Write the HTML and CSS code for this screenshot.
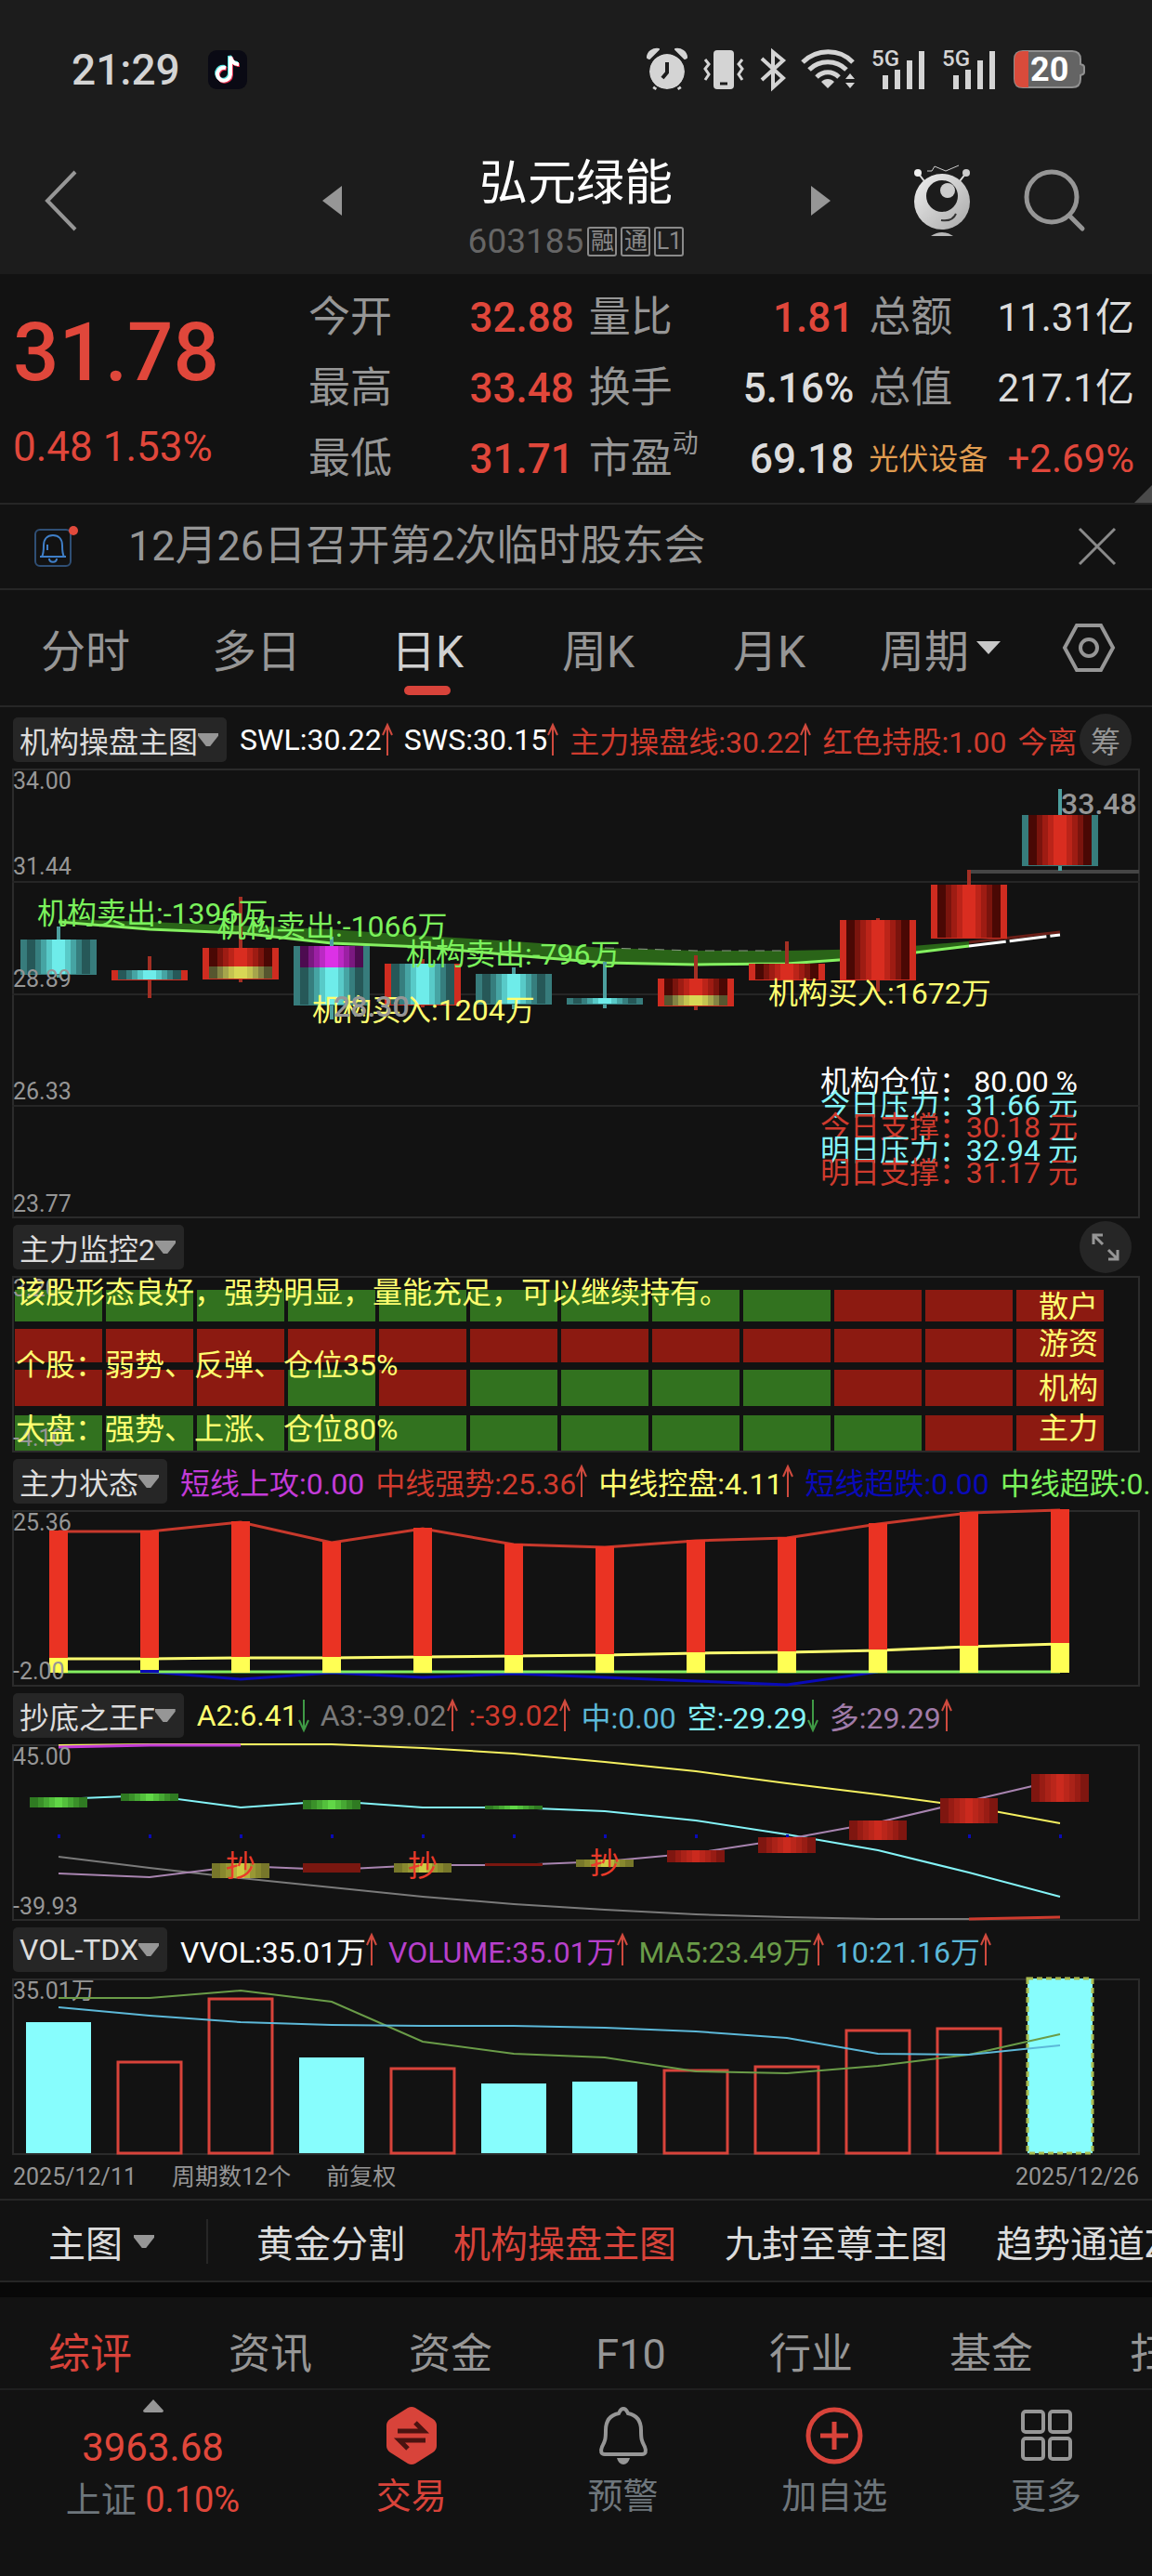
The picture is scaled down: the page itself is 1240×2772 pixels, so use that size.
FILE: index.html
```html
<!DOCTYPE html>
<html lang="zh-CN">
<head>
    <meta charset="UTF-8">
    <meta name="viewport" content="width=device-width, initial-scale=1.0">
    <title>弘元绿能 603185</title>
    <link rel="stylesheet" href="styles.css">
</head>
<body>
    <header class="top">
        <div class="status-bar">
            <span class="clock">21:29</span>
            <svg class="app-icon" width="42" height="42" viewBox="0 0 42 42">
                <rect width="42" height="42" rx="9" fill="#0a0a14"/>
                <g fill="none" stroke-width="4">
                    <path d="M18 18a7 7 0 1 0 5 7V6c1 5 4 8 9 8" stroke="#4fe3e0"/>
                    <path d="M20 20a7 7 0 1 0 5 7V8c1 5 4 8 9 8" stroke="#e8304f"/>
                    <path d="M19 19a7 7 0 1 0 5 7V7c1 5 4 8 9 8" stroke="#fff"/>
                </g>
            </svg>
            <div class="status-icons">
                <svg width="44" height="46" viewBox="0 0 44 46" fill="#d4d4d4">
                    <circle cx="22" cy="25" r="19"/>
                    <path d="M1 10C1 4 7 0 13 1L3 11zM43 10C43 4 37 0 31 1l10 10z" stroke="#d4d4d4" stroke-width="2" stroke-linejoin="round"/>
                    <path d="M12 38l-4 6M32 38l4 6" stroke="#d4d4d4" stroke-width="4"/>
                    <circle cx="22" cy="25" r="20" fill="none" stroke="#1c1c1c" stroke-width="2"/>
                    <path d="M22 15v11l-5 6" fill="none" stroke="#1c1c1c" stroke-width="4"/>
                </svg>
                <svg width="46" height="44" viewBox="0 0 46 44" fill="none" stroke="#d4d4d4" stroke-width="3">
                    <rect x="12" y="1" width="22" height="42" rx="4" fill="#d4d4d4" stroke="none"/>
                    <path d="M19 37h8" stroke="#1c1c1c"/>
                    <path d="M3 11l4 5-4 5 4 6-4 6M43 11l-4 5 4 5-4 6 4 6"/>
                </svg>
                <svg width="28" height="44" viewBox="0 0 28 44" fill="none" stroke="#d4d4d4" stroke-width="4">
                    <path d="M2 10l23 21-11 10V3l11 9L2 33"/>
                </svg>
                <svg width="60" height="44" viewBox="0 0 60 44" fill="none" stroke="#d4d4d4" stroke-width="5">
                    <path d="M2 14c15-15 40-15 54 0M9 22c11-11 29-11 40 0M17 30c7-7 17-7 24 0"/>
                    <path d="M29 42l-7-7c4-4 10-4 14 0zM48 32l5-6 5 6zM48 36l5 6 5-6z" fill="#d4d4d4" stroke="none"/>
                </svg>
                <svg width="60" height="44" viewBox="0 0 60 44" fill="#d4d4d4">
                    <text x="0" y="18" class="net">5G</text>
                    <path d="M12 28h6v15h-6zM25 22h6v21h-6zM38 12h6v31h-6zM51 2h6v41h-6z"/>
                </svg>
                <svg width="60" height="44" viewBox="0 0 60 44" fill="#d4d4d4">
                    <text x="0" y="18" class="net">5G</text>
                    <path d="M12 28h6v15h-6zM25 22h6v21h-6zM38 12h6v31h-6zM51 2h6v41h-6z"/>
                </svg>
                <svg width="78" height="42" viewBox="0 0 78 42">
                    <path d="M11 1h53q9 0 9 9v5q4 1 4 3v6q0 2-4 3v4q0 9-9 9H11q-9 0-9-9V10q0-9 9-9z" fill="#646464" stroke="#909090" stroke-width="2"/>
                    <path d="M17 1h-6q-9 0-9 9v21q0 9 9 9h6z" fill="#d94b3b"/>
                    <text x="19" y="33" class="battery">20</text>
                </svg>
            </div>
        </div>
        <div class="title-bar">
            <button class="icon-btn" aria-label="返回">
                <svg width="36" height="66" viewBox="0 0 36 66" fill="none" stroke="#969696" stroke-width="4"><path d="M33 2L3 33l30 31"/></svg>
            </button>
            <div class="stock">
                <button class="icon-btn" aria-label="上一只">
                    <svg width="21" height="32" viewBox="0 0 21 32"><path d="M21 0v32L0 16z" fill="#969696"/></svg>
                </button>
                <div class="stock-name">
                    <h1>弘元绿能</h1>
                    <div class="stock-code">603185<span class="tag">融</span><span class="tag">通</span><span class="tag">L1</span></div>
                </div>
                <button class="icon-btn" aria-label="下一只">
                    <svg width="21" height="32" viewBox="0 0 21 32"><path d="M0 0v32l21-16z" fill="#969696"/></svg>
                </button>
            </div>
            <div class="title-tools">
                <button class="icon-btn" aria-label="助手">
                    <svg width="62" height="78" viewBox="0 0 62 78">
                        <defs>
                            <linearGradient id="robot" x1="0" y1="0" x2="1" y2="1">
                                <stop offset="0" stop-color="#f0f0f0"/>
                                <stop offset="1" stop-color="#a8a8a8"/>
                            </linearGradient>
                        </defs>
                        <path d="M5 9l7 9M57 9l-7 9" stroke="#ddd" stroke-width="2"/>
                        <circle cx="5" cy="9" r="4" fill="#eee"/>
                        <circle cx="57" cy="9" r="4" fill="#ccc"/>
                        <path d="M15 7h5l3-5 12 5 14-6" fill="none" stroke="#ccc" stroke-width="1"/>
                        <circle cx="31" cy="40" r="30" fill="url(#robot)"/>
                        <circle cx="31" cy="34" r="17" fill="#1c1c1c"/>
                        <circle cx="37" cy="28" r="8" fill="#ccc"/>
                        <path d="M30 60q12 2 16-7" fill="none" stroke="#333" stroke-width="2"/>
                        <path d="M19 77q12-8 24 0z" fill="#b8b8b8"/>
                    </svg>
                </button>
                <button class="icon-btn" aria-label="搜索">
                    <svg width="66" height="66" viewBox="0 0 66 66" fill="none" stroke="#969696" stroke-width="5"><circle cx="30" cy="29" r="27"/><path d="M49 49l14 14" stroke-linecap="round"/></svg>
                </button>
            </div>
        </div>
    </header>

    <main>
        <section class="quote">
            <div class="price up">
                <div class="price-now">31.78</div>
                <div class="price-change">0.48 1.53%</div>
            </div>
            <dl class="quote-grid">
                <div><dt>今开</dt><dd class="up">32.88</dd></div>
                <div><dt>量比</dt><dd class="up">1.81</dd></div>
                <div><dt>总额</dt><dd class="small">11.31亿</dd></div>
                <div><dt>最高</dt><dd class="up">33.48</dd></div>
                <div><dt>换手</dt><dd>5.16%</dd></div>
                <div><dt>总值</dt><dd class="small">217.1亿</dd></div>
                <div><dt>最低</dt><dd class="up">31.71</dd></div>
                <div><dt>市盈<sup>动</sup></dt><dd>69.18</dd></div>
                <div><dt class="sector">光伏设备</dt><dd class="small up">+2.69%</dd></div>
            </dl>
            <span class="corner"></span>
        </section>

        <section class="notice">
            <svg width="48" height="48" viewBox="0 0 48 48" fill="none" stroke="#3f7fc8" stroke-width="3">
                <rect x="2" y="6" width="38" height="39" rx="5" stroke="#2f4f75" stroke-width="2"/>
                <path d="M7 35h28M9 35c2-3 2-7 2-12 0-7 4-11 10-11s10 4 10 11c0 5 0 9 2 12M17 37c0 5 8 5 8 0" stroke-width="2"/>
                <path d="M15 28v-6" stroke-width="2"/>
                <circle cx="43" cy="7" r="5" fill="#e04a3c" stroke="none"/>
            </svg>
            <a href="#">12月26日召开第2次临时股东会</a>
            <button class="icon-btn" aria-label="关闭">
                <svg width="40" height="40" viewBox="0 0 40 40" stroke="#8a8a8a" stroke-width="3"><path d="M1 1l38 38M39 1L1 39"/></svg>
            </button>
        </section>

        <nav class="periods">
            <button>分时</button>
            <button>多日</button>
            <button class="active">日K</button>
            <button>周K</button>
            <button>月K</button>
            <button>周期<i class="caret light"></i></button>
            <button class="settings" aria-label="设置">
                <svg width="58" height="52" viewBox="0 0 58 52" fill="none" stroke="#969696" stroke-width="4"><path d="M16 2h26l13 24-13 24H16L3 26z"/><circle cx="29" cy="26" r="9"/></svg>
            </button>
        </nav>

        <section class="panel first">
            <div class="panel-head">
                <button class="indicator">机构操盘主图<i class="caret"></i></button>
                <div class="legend" data-legend="main"></div>
                <button class="round">筹</button>
            </div>
            <svg class="chart" id="chart-main" viewBox="0 0 1214 484"></svg>
        </section>

        <section class="panel">
            <div class="panel-head">
                <button class="indicator">主力监控2<i class="caret"></i></button>
                <div class="legend"></div>
                <button class="round" aria-label="全屏">
                    <svg width="30" height="30" viewBox="0 0 30 30" fill="none" stroke="#969696" stroke-width="3"><path d="M2 12V2h10M2 2l10 10M28 18v10H18M28 28L18 18"/></svg>
                </button>
            </div>
            <svg class="chart" id="chart-monitor" viewBox="0 0 1214 190"></svg>
        </section>

        <section class="panel">
            <div class="panel-head">
                <button class="indicator">主力状态<i class="caret"></i></button>
                <div class="legend" data-legend="state"></div>
            </div>
            <svg class="chart" id="chart-state" viewBox="0 0 1214 190"></svg>
        </section>

        <section class="panel">
            <div class="panel-head">
                <button class="indicator">抄底之王F<i class="caret"></i></button>
                <div class="legend" data-legend="bottom"></div>
            </div>
            <svg class="chart" id="chart-bottom" viewBox="0 0 1214 190"></svg>
        </section>

        <section class="panel">
            <div class="panel-head">
                <button class="indicator">VOL-TDX<i class="caret"></i></button>
                <div class="legend" data-legend="vol"></div>
            </div>
            <svg class="chart" id="chart-vol" viewBox="0 0 1214 190"></svg>
        </section>

        <div class="range">
            <span>2025/12/11</span>
            <span>周期数12个</span>
            <span>前复权</span>
            <span class="range-end">2025/12/26</span>
        </div>

        <div class="templates">
            <button class="template-pick">主图<i class="caret"></i></button>
            <button>黄金分割</button>
            <button class="active">机构操盘主图</button>
            <button>九封至尊主图</button>
            <button>趋势通道Z</button>
        </div>

        <nav class="info-tabs">
            <a href="#" class="active">综评</a>
            <a href="#">资讯</a>
            <a href="#">资金</a>
            <a href="#">F10</a>
            <a href="#">行业</a>
            <a href="#">基金</a>
            <a href="#">扫雷</a>
        </nav>
    </main>

    <footer class="bottom-nav">
        <a href="#" class="index">
            <svg width="22" height="14" viewBox="0 0 22 14"><path d="M11 0l11 12q0 2-2 2H2q-2 0-2-2z" fill="#969696"/></svg>
            <span class="index-value">3963.68</span>
            <span class="index-name">上证 <b>0.10%</b></span>
        </a>
        <a href="#" class="active">
            <svg width="56" height="62" viewBox="0 0 56 62">
                <path d="M24 1q4-2 8 0l19 12q4 3 4 7v22q0 4-4 7L32 61q-4 2-8 0L5 49q-4-3-4-7V20q0-4 4-7z" fill="#d8433a"/>
                <path d="M13 26h28l-9-9M43 36H15l9 9" fill="none" stroke="#4a1310" stroke-width="5"/>
            </svg>
            <span>交易</span>
        </a>
        <a href="#">
            <svg width="56" height="62" viewBox="0 0 56 62" fill="none" stroke="#969696" stroke-width="4">
                <path d="M28 2c-3 0-4 3-5 5C13 9 9 16 9 25c0 11-1 12-4 18-2 5-1 8 3 8h40c4 0 5-3 3-8-3-6-4-7-4-18 0-9-4-16-14-18-1-2-2-5-5-5z"/>
                <path d="M21 55h14q-2 7-7 7t-7-7z" fill="#969696" stroke="none"/>
            </svg>
            <span>预警</span>
        </a>
        <a href="#">
            <svg width="62" height="62" viewBox="0 0 62 62" fill="none" stroke="#d8433a" stroke-width="5"><circle cx="31" cy="31" r="28"/><path d="M16 31h30M31 16v30"/></svg>
            <span>加自选</span>
        </a>
        <a href="#">
            <svg width="56" height="62" viewBox="0 0 56 62" fill="none" stroke="#969696" stroke-width="4"><rect x="3" y="5" width="22" height="22" rx="3"/><rect x="32" y="5" width="22" height="22" rx="3"/><rect x="3" y="34" width="22" height="22" rx="3"/><rect x="32" y="34" width="22" height="22" rx="3"/></svg>
            <span>更多</span>
        </a>
    </footer>

    <script>
        const STEP = 98;
        const FIRST = 50;
        const cx = i => FIRST + i * STEP;

        const RED = ['#4a0804', '#7a140d', '#9e1c13', '#bb2419', '#d92d20'];
        const CYAN = ['#265858', '#367e7e', '#46a4a3', '#58cac8', '#6eecea'];
        const YELLOW = ['#56562f', '#838343', '#a6a54b', '#c4c350', '#d8d755'];
        const MAGENTA = ['#4d0b50', '#7a1880', '#9c20a4', '#bb29c4', '#dc31e6'];
        const GREEN = ['#2f7a22', '#3a9029', '#46a833', '#53c03c', '#61d747'];
        const OLIVE = ['#77772a', '#88882e', '#989834', '#b6b53c', '#cfcd44'];
        const BRICK = ['#7f1610', '#981c14', '#aa2218', '#ba261b', '#cb2a1e'];
        const DARK = ['#7a1710', '#7a1710', '#7a1710', '#7a1710', '#7a1710'];

        const rect = (x, y, w, h, fill, extra = '') =>
            `<rect x="${x}" y="${y}" width="${w}" height="${h}" fill="${fill}" ${extra}/>`;

        const line = (values, color, width = 2, start = 0, extra = '') =>
            `<polyline points="${values.map((v, i) => cx(i + start) + ',' + v).join(' ')}" fill="none" stroke="${color}" stroke-width="${width}" ${extra}/>`;

        const text = (x, y, str, color, cls = '') =>
            `<text x="${x}" y="${y}" fill="${color}" class="${cls}">${str}</text>`;

        const frame = h => `<rect x="1" y="1" width="1212" height="${h - 2}" fill="none" stroke="#2b2b2b" stroke-width="2"/>`;

        // Vertical bands, dark at both sides and bright in the middle
        function shaded(i, top, bottom, colors, half) {
            const steps = [half, half - 9, half - 15, half - 21, half - 27];
            return steps.map((s, k) => rect(cx(i) - s, top, s * 2, bottom - top, colors[k])).join('');
        }

        // [body top, body bottom, wick top, wick bottom, edge, fill, split, fill below the split]
        const candles = [
            [184, 222, 170, 225, 'c', CYAN],
            [217, 228, 202, 247, 'r', CYAN],
            [193, 227, 138, 230, 'r', RED, 213, YELLOW],
            [191, 255, 181, 270, 'c', MAGENTA, 214, CYAN],
            [210, 255, 205, 257, 'r', CYAN],
            [221, 254, 214, 259, 'c', CYAN],
            [247, 254, 208, 258, 'c', CYAN],
            [226, 256, 201, 260, 'r', RED, 244, YELLOW],
            [210, 228, 186, 229, 'r', RED],
            [163, 228, 161, 240, 'r', RED],
            [125, 183, 109, 183, 'r', RED],
            [50, 105, 22, 110, 'c', RED]
        ];

        function drawMain() {
            let out = frame(484);
            [121, 242, 362].forEach(y => { out += rect(0, y, 1214, 2, '#262626'); });

            const upper = [162, 165, 169, 173, 180, 186, 193, 196, 196, 194, 186];
            const lower = [165, 173, 177, 188, 192, 201, 209, 211, 210, 203, 191];
            const band = upper.map((v, i) => cx(i) + ',' + v)
                .concat(lower.map((v, i) => cx(i) + ',' + v).reverse());
            out += `<polygon points="${band.join(' ')}" fill="#2a6418"/>`;
            out += line([193, 196, 196], '#8a9a84', 1, 6, 'stroke-dasharray="10 8"');
            out += line(lower, '#84f060', 3);
            out += line([187, 176], '#6a1f18', 3, 10);
            out += line([191, 179], '#fff', 3, 10, 'stroke-dasharray="40 4"');
            out += rect(1030, 109, 183, 4, '#454545');

            candles.forEach(([top, bottom, high, low, edge, fill, split, below], i) => {
                const edgeColor = edge === 'r' ? '#cf2c20' : '#377c7c';
                const wick = edge === 'r' ? '#a32f24' : '#4c9f9e';
                out += rect(cx(i) - 2, high, 4, low - high, wick);
                out += rect(cx(i) - 41, top, 82, bottom - top, edgeColor);
                out += shaded(i, top, (split || bottom - 1), fill, 34);
                if (split) out += shaded(i, split, bottom - 1, below, 34);
            });

            ['34.00', '31.44', '28.89', '26.33', '23.77'].forEach((v, k) => {
                out += text(1, [22, 114, 235, 356, 477][k], v, '#969696', 'axis');
            });
            out += text(27, 167, '机构卖出:-1396万', '#7bf25c');
            out += text(220, 181, '机构卖出:-1066万', '#7bf25c');
            out += text(424, 211, '机构卖出:-796万', '#7bf25c');
            out += text(323, 271, '机构买入:1204万', '#ffff70');
            out += text(346, 267, '28.30', '#969696', 'num');
            out += text(814, 253, '机构买入:1672万', '#ffff70');
            out += text(1129, 49, '33.48', '#969696', 'num');

            const levels = [
                ['机构仓位：', '80.00 %', '#ffffff'],
                ['今日压力：', '31.66 元', '#84f4f8'],
                ['今日支撑：', '30.18 元', '#cf3b2e'],
                ['明日压力：', '32.94 元', '#84f4f8'],
                ['明日支撑：', '31.17 元', '#cf3b2e']
            ];
            levels.forEach(([name, value, color], k) => {
                const y = 348 + [0, 25, 49, 74, 98][k];
                out += text(870, y, name, color);
                out += text(1147, y, value, color, 'end');
            });
            document.getElementById('chart-main').innerHTML = out;
        }

        function drawMonitor() {
            const rows = [
                [15, 34, 'GGGGGGGGGRRR', '散户', 44],
                [57, 36, 'RRRRRRRRRRRR', '游资', 84],
                [101, 39, 'RRRGRGGGGRRR', '机构', 132],
                [150, 38, 'GGGGGGGGGGRR', '主力', 175]
            ];
            let out = frame(190);
            rows.forEach(([y, h, cells]) => {
                [...cells].forEach((c, i) => {
                    out += rect(3 + i * STEP, y, 94, h, c === 'G' ? '#32721f' : '#8c1a11');
                });
            });
            out += text(1, 22, '3.20', '#969696', 'axis');
            out += text(1, 183, '-4.10', '#969696', 'axis');
            rows.forEach(([, , , name, base]) => { out += text(1105, base, name, '#ffff70'); });
            out += text(4, 29, '该股形态良好，强势明显，量能充足，可以继续持有。', '#ffff70');
            out += text(4, 107, '个股：弱势、反弹、仓位35%', '#ffff70');
            out += text(4, 176, '大盘：强势、上涨、仓位80%', '#ffff70');
            document.getElementById('chart-monitor').innerHTML = out;
        }

        function drawState() {
            const strong = [23, 23, 13, 35, 20, 37, 40, 33, 30, 15, 3, 0];
            const control = [160, 160, 159, 159, 158, 157, 156, 154, 153, 151, 147, 144];
            let out = frame(190);
            out += line([174, 182, 175, 180, 176, 180, 184, 188, 174], '#0a0ab8', 3, 1);
            out += line(strong, '#c8392c', 3);
            out += line(control, '#ffff70', 3);
            out += line(strong.map(() => 174), '#84f060', 3);
            strong.forEach((v, i) => {
                out += rect(cx(i) - 10, v - 1, 20, control[i] - v, '#ea3323');
                out += rect(cx(i) - 10, control[i] - 1, 20, 176 - control[i], '#ffff54');
            });
            out += rect(cx(1) - 10, 172, 20, 3, '#0a0ab8');
            out += text(1, 22, '25.36', '#969696', 'axis');
            out += text(1, 182, '-2.00', '#969696', 'axis');
            document.getElementById('chart-state').innerHTML = out;
        }

        function drawBottom() {
            let out = frame(190);
            out += line([1, 0, 0, 0, 4, 10, 19, 29, 42, 54, 67, 85], '#f5f060', 2);
            out += line([3, 1, 1], '#c33bd8', 3);
            out += line([121, 133, 144, 154, 164, 172, 178, 183, 186, 188, 188], '#7a7a7a', 2);
            out += line([188, 186], '#cf3b2e', 3, 10);
            out += line([59, 55, 68, 61, 68, 68, 72, 82, 97, 114, 138, 164], '#84f4f8', 2);
            out += line([139, 143, 131, 135, 130, 130, 126, 117, 102, 84, 61, 38], '#a884b0', 2);
            for (let i = 0; i < 12; i++) out += rect(cx(i) - 1, 97, 3, 4, '#0a0ab8');
            const boxes = [
                [0, 57, 68, GREEN], [1, 53, 61, GREEN], [3, 60, 70, GREEN], [5, 66, 70, GREEN],
                [2, 128, 144, OLIVE], [4, 128, 138, OLIVE], [6, 124, 132, OLIVE],
                [3, 128, 138, DARK], [5, 128, 131, DARK],
                [7, 114, 127, BRICK], [8, 100, 117, BRICK], [9, 82, 103, BRICK],
                [10, 58, 85, BRICK], [11, 32, 62, BRICK]
            ];
            boxes.forEach(([i, top, bottom, colors]) => { out += shaded(i, top, bottom, colors, 31); });
            [[2, 142], [4, 142], [6, 139]].forEach(([i, y]) => { out += text(cx(i), y, '抄', '#ea3a2a', 'mid'); });
            out += text(1, 22, '45.00', '#969696', 'axis');
            out += text(1, 183, '-39.93', '#969696', 'axis');
            document.getElementById('chart-bottom').innerHTML = out;
        }

        function drawVolume() {
            const tops = [47, 89, 21, 85, 96, 113, 111, 98, 94, 55, 53, 0];
            const kinds = 'crrcrccrrrrc';
            let out = frame(190);
            out += text(1, 22, '35.01万', '#969696', 'axis');
            tops.forEach((y, i) => {
                if (kinds[i] === 'c') out += rect(cx(i) - 35, y, 70, 188 - y, '#87fdfd');
                else out += rect(cx(i) - 34, y + 1, 68, 187 - y, 'none', 'stroke="#d8433a" stroke-width="3"');
            });
            out += rect(cx(11) - 35, 0, 70, 188, 'none', 'stroke="#a9bd50" stroke-width="3" stroke-dasharray="6 4"');
            out += line([21, 21, 13, 25, 68, 81, 85, 100, 102, 94, 82, 60], '#6a9c48', 2);
            out += line([31, 40, 47, 50, 51, 51, 53, 57, 64, 81, 82, 72], '#5cb8d8', 2);
            document.getElementById('chart-vol').innerHTML = out;
        }

        // [text, colour, trend]
        const legends = {
            main: [
                ['SWL:30.22', '#ffffff', 'up'], ['SWS:30.15', '#ffffff', 'up'],
                ['主力操盘线:30.22', '#cf3b2e', 'up'], ['红色持股:1.00', '#cf3b2e'], ['今离', '#cf3b2e']
            ],
            state: [
                ['短线上攻:0.00', '#c33bd8'], ['中线强势:25.36', '#cf3b2e', 'up'],
                ['中线控盘:4.11', '#ffff70', 'up'], ['短线超跌:0.00', '#0a0ab8'], ['中线超跌:0.00', '#7bf25c']
            ],
            bottom: [
                ['A2:6.41', '#ffff70', 'down'], ['A3:-39.02', '#7a7a7a', 'up'], [':-39.02', '#cf3b2e', 'up'],
                ['中:0.00', '#5cb8d8'], ['空:-29.29', '#84f4f8', 'down'], ['多:29.29', '#a07ba8', 'up']
            ],
            vol: [
                ['VVOL:35.01万', '#ffffff', 'up'], ['VOLUME:35.01万', '#b840cc', 'up'],
                ['MA5:23.49万', '#6a9c48', 'up'], ['10:21.16万', '#5cb8d8', 'up']
            ]
        };

        const arrows = {
            up: '<svg width="12" height="34" viewBox="0 0 12 34" fill="none" stroke="#d04a3e" stroke-width="2"><path d="M6 34V1M1 12L6 1l5 11"/></svg>',
            down: '<svg width="12" height="34" viewBox="0 0 12 34" fill="none" stroke="#3f9a45" stroke-width="2"><path d="M6 0v33M1 22l5 11 5-11"/></svg>'
        };

        document.querySelectorAll('[data-legend]').forEach(el => {
            el.innerHTML = legends[el.dataset.legend].map(([label, color, trend]) =>
                `<span style="color:${color}">${label}${arrows[trend] || ''}</span>`).join('');
        });

        drawMain();
        drawMonitor();
        drawState();
        drawBottom();
        drawVolume();
    </script>
</body>
</html>
```
FILE: styles.css
```css
* {
    box-sizing: border-box;
}
body {
    margin: 0;
    background-color: #121212;
    color: #dcdcdc;
    font-family: Roboto, "Noto Sans CJK SC", sans-serif;
    overflow-x: hidden;
}
button {
    background: none;
    border: none;
    padding: 0;
    color: inherit;
    font: inherit;
    white-space: nowrap;
    cursor: pointer;
}
a {
    color: inherit;
    text-decoration: none;
}
svg {
    display: block;
    flex: none;
    overflow: visible;
}
.up {
    color: #e0473b;
}
.icon-btn {
    display: flex;
}
.caret {
    display: inline-block;
    width: 22px;
    height: 14px;
    background-color: #969696;
    clip-path: polygon(0 0, 100% 0, 100% 20%, 60% 100%, 40% 100%, 0 20%);
}
.caret.light {
    width: 26px;
    background-color: #c8c8c8;
    clip-path: polygon(0 0, 100% 0, 50% 100%);
    margin-left: 8px;
}

/* header */
.top {
    background-color: #1c1c1c;
    padding-bottom: 13px;
}
.status-bar {
    display: flex;
    align-items: center;
    height: 150px;
    padding: 0 72px 0 77px;
}
.clock {
    font-size: 46px;
    font-weight: 500;
    color: #d4d4d4;
}
.app-icon {
    margin-left: 30px;
}
.status-icons {
    display: flex;
    align-items: center;
    gap: 16px;
    margin-left: auto;
}
.net {
    font-size: 24px;
    font-weight: 500;
}
.battery {
    font-size: 36px;
    font-weight: 700;
    fill: #fff;
}
.title-bar {
    display: grid;
    grid-template-columns: 1fr 547px 1fr;
    align-items: center;
    height: 132px;
    padding: 0 72px 0 48px;
}
.stock {
    display: flex;
    align-items: center;
    justify-content: space-between;
    margin-left: 12px;
    margin-right: -12px;
}
.stock-name {
    padding-top: 18px;
    text-align: center;
}
h1 {
    margin: 0 0 10px;
    font-size: 52px;
    font-weight: 400;
    line-height: 60px;
    color: #fff;
}
.stock-code {
    display: flex;
    align-items: center;
    gap: 4px;
    font-size: 37px;
    line-height: 44px;
    color: #666;
}
.tag {
    width: 32px;
    height: 32px;
    border: 2px solid #8a8a8a;
    border-radius: 3px;
    font-size: 25px;
    line-height: 28px;
    color: #8a8a8a;
}
.title-tools {
    display: flex;
    align-items: center;
    justify-content: flex-end;
    gap: 57px;
}

/* quote */
.quote {
    position: relative;
    display: flex;
    padding: 9px 19px 9px 14px;
    border-bottom: 2px solid #262626;
}
.price {
    width: 318px;
    padding-top: 25px;
}
.price-now {
    font-size: 87px;
    font-weight: 500;
    line-height: 100px;
    margin-bottom: 22px;
}
.price-change {
    font-size: 44px;
    line-height: 60px;
}
.quote-grid {
    flex: 1;
    display: grid;
    grid-template-columns: repeat(3, 1fr);
    column-gap: 16px;
    margin: 0;
}
.quote-grid div {
    display: flex;
    align-items: center;
    justify-content: space-between;
    height: 76px;
    line-height: 76px;
}
dt {
    position: relative;
    font-size: 45px;
    color: #969696;
}
dt sup {
    position: absolute;
    left: 100%;
    top: -16px;
    font-size: 28px;
}
dt.sector {
    font-size: 32px;
    color: #e09c50;
}
dd {
    margin: 0;
    font-size: 44px;
    font-weight: 500;
}
dd.small {
    font-size: 42px;
    font-weight: 400;
}
.corner {
    position: absolute;
    right: 0;
    bottom: 0;
    border: solid transparent;
    border-width: 0 0 19px 19px;
    border-bottom-color: #4a4a4a;
}

/* notice */
.notice {
    display: flex;
    align-items: center;
    height: 92px;
    padding: 0 39px 0 36px;
    border-bottom: 2px solid #262626;
    font-size: 45px;
    line-height: 86px;
    color: #969696;
}
.notice a {
    flex: 1;
    margin-left: 54px;
}

/* period tabs */
.periods {
    display: flex;
    height: 126px;
    border-bottom: 2px solid #262626;
    font-size: 48px;
    color: #969696;
}
.periods button {
    position: relative;
    display: flex;
    align-items: center;
    justify-content: center;
    flex: 184;
}
.periods .settings {
    flex: 136;
}
.periods .active {
    color: #d0d0d0;
}
.periods .active::after {
    content: "";
    position: absolute;
    bottom: 11px;
    width: 50px;
    height: 10px;
    border-radius: 5px;
    background-color: #d8433a;
}

/* chart panels */
.panel.first {
    padding-top: 4px;
}
.panel-head {
    display: flex;
    align-items: center;
    height: 62px;
    padding-left: 14px;
    font-size: 32px;
}
.indicator {
    display: flex;
    align-items: center;
    height: 48px;
    padding: 0 9px 0 7px;
    border-radius: 5px;
    background-color: #262626;
}
.legend {
    flex: 1;
    display: flex;
    gap: 12px;
    min-width: 0;
    margin-left: 14px;
    overflow: hidden;
    white-space: nowrap;
}
.legend span {
    display: flex;
    align-items: center;
}
.round {
    display: flex;
    align-items: center;
    justify-content: center;
    width: 56px;
    height: 56px;
    margin-right: 22px;
    border-radius: 50%;
    background-color: #262626;
    color: #969696;
}
.chart {
    width: calc(100% - 26px);
    margin: 0 13px;
    font-size: 32px;
}
.chart .num {
    font-weight: 500;
}
.chart .axis {
    font-size: 25px;
}
.chart .end {
    text-anchor: end;
}
.chart .mid {
    text-anchor: middle;
}
.range {
    display: flex;
    gap: 38px;
    padding: 0 14px;
    border-bottom: 2px solid #262626;
    font-size: 25px;
    line-height: 47px;
    color: #969696;
}
.range-end {
    margin-left: auto;
}

/* template strip */
.templates {
    display: flex;
    align-items: center;
    gap: 52px;
    height: 104px;
    padding-left: 52px;
    border-bottom: 16px solid #080808;
    box-shadow: inset 0 -2px #262626;
    overflow: hidden;
    font-size: 40px;
}
.templates .active,
.info-tabs .active,
.bottom-nav .active {
    color: #d8433a;
}
.template-pick {
    display: flex;
    align-items: center;
    height: 48px;
    padding-right: 56px;
    border-right: 2px solid #262626;
}
.template-pick .caret {
    margin-left: 12px;
}

/* info tabs */
.info-tabs {
    display: flex;
    height: 100px;
    padding-top: 22px;
    border-bottom: 2px solid #1f1f1f;
    overflow: hidden;
    font-size: 45px;
    line-height: 80px;
    color: #969696;
}
.info-tabs a {
    flex: 0 0 194px;
    text-align: center;
}

/* bottom bar */
.bottom-nav {
    display: grid;
    grid-template-columns: 329px repeat(4, 1fr);
    padding-bottom: 60px;
    font-size: 38px;
    line-height: 50px;
    color: #6e767c;
}
.bottom-nav a {
    display: flex;
    flex-direction: column;
    align-items: center;
    gap: 9px;
    padding-top: 18px;
}
.bottom-nav .index {
    gap: 10px;
    padding-top: 10px;
    line-height: 36px;
}
.bottom-nav .index-value {
    font-size: 42px;
    line-height: 56px;
    color: #e0473b;
}
.index b {
    font-weight: 400;
    color: #e0473b;
}
```
